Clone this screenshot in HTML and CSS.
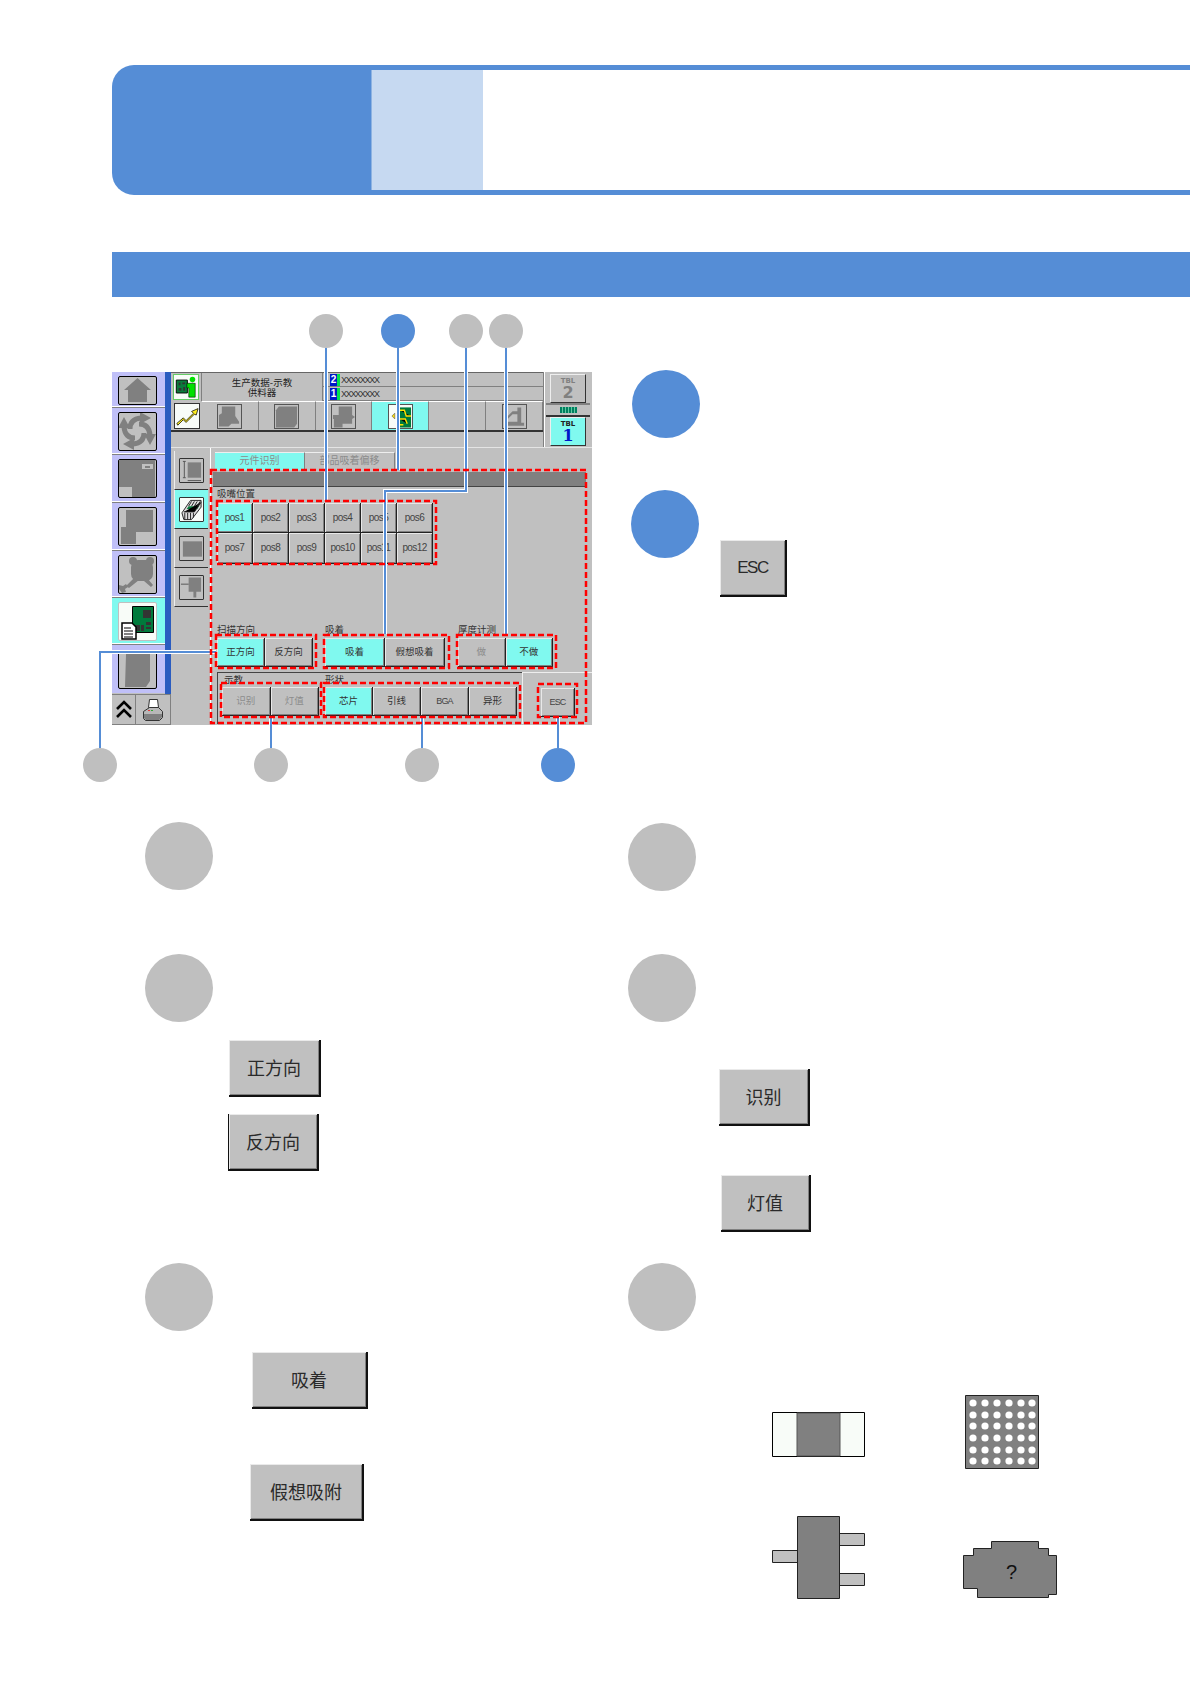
FILE: index.html
```html
<!DOCTYPE html>
<html lang="zh">
<head>
<meta charset="utf-8">
<title>吸嘴位置</title>
<link rel="stylesheet" href="styles.css">
</head>
<body>
<header class="chapter">
  <div class="chapter-tab"></div>
  <div class="chapter-rest"><div class="chapter-light"></div></div>
</header>
<div class="section-bar"></div>

<section class="stage">
  <div class="panel">
    <div class="side">
      <div class="rail">
        <nav class="rail-stack">
          <div class="rail-row first"><div class="nav-btn short">
            <svg width="39" height="29" viewBox="0 0 39 29"><path class="g" d="M19.5 2 33 14h-4v12H10V14H6z"/></svg>
          </div></div>
          <div class="rail-row h47"><div class="nav-btn">
            <svg width="39" height="39" viewBox="0 0 39 39">
              <g class="swirl">
                <g><path class="arm" d="M12 17Q12 7 23 6"/><path class="g" d="M22 0 33 6 22 12z"/></g>
                <g transform="rotate(90 19 19)"><path class="arm" d="M12 17Q12 7 23 6"/><path class="g" d="M22 0 33 6 22 12z"/></g>
                <g transform="rotate(180 19 19)"><path class="arm" d="M12 17Q12 7 23 6"/><path class="g" d="M22 0 33 6 22 12z"/></g>
                <g transform="rotate(270 19 19)"><path class="arm" d="M12 17Q12 7 23 6"/><path class="g" d="M22 0 33 6 22 12z"/></g>
              </g>
            </svg>
          </div></div>
          <div class="rail-row"><div class="nav-btn">
            <svg width="39" height="39" viewBox="0 0 39 39"><path class="g" d="M1 1h36v37H14V28H1z"/><path class="lt" d="M24 5h11v5H24z"/><path class="g" d="M27 7h5v2h-5z"/></svg>
          </div></div>
          <div class="rail-row"><div class="nav-btn">
            <svg width="39" height="39" viewBox="0 0 39 39"><path class="g" d="M8 3h27v22H18v12H3V20h5z"/></svg>
          </div></div>
          <div class="rail-row h47"><div class="nav-btn">
            <svg width="39" height="39" viewBox="0 0 39 39">
              <circle class="g" cx="15" cy="6" r="4"/><circle class="g" cx="32" cy="6" r="4"/>
              <rect class="g" x="13" y="5" width="22" height="21" rx="7"/>
              <path class="g" d="M30 24l5 6-2 2-7-6zM17 22l4 3-10 8-3-2z"/>
              <path class="g" d="M1 30l4 1 3-2 2 3-3 2 1 3-4 1-3-4z"/>
            </svg>
          </div></div>
          <div class="rail-row h47 active"><div class="nav-btn white">
            <svg width="39" height="39" viewBox="0 0 39 39">
              <path fill="#007a3c" stroke="#000" d="M14.500 4.500h21v26h-21z"/>
              <path fill="#333" d="M25 8h8v8h-8zM28 20h5v3h-5zM28 25h5v2h-5zM17 23h5v6h-5zM23 23h3v6h-3z"/>
              <path fill="#fff" stroke="#000" stroke-width="1.500" d="M4 21h10l4 4v12H4z"/>
              <path stroke="#000" d="M6 26h7M6 29h9M6 32h9M6 35h9"/>
            </svg>
          </div></div>
          <div class="rail-row h48"><div class="nav-btn">
            <svg width="39" height="39" viewBox="0 0 39 39"><path class="g" d="M8 4h24v27l-4 6H7z"/></svg>
          </div></div>
        </nav>
        <div class="rail-stripe"></div>
      </div>
      <div class="side-foot">
        <div class="foot-cell up">
          <svg width="18" height="19" viewBox="0 0 18 19"><path fill="none" stroke="#000" stroke-width="2.600" d="M2 9l7-7 7 7M2 17l7-7 7 7"/></svg>
        </div>
        <div class="foot-cell print">
          <svg width="22" height="24" viewBox="0 0 22 24"><path fill="#fff" stroke="#333" d="M7.500 1.500h8l1 8h-10z"/><path fill="#b8b8b8" stroke="#333" d="M1.500 13.500l6-4h9l4 4v6l-3 3h-14l-2-2z"/><path fill="#808080" d="M2 16h18v3l-3 3H4l-2-2z"/><path fill="#e33" d="M6 12h2v1H6z"/><path fill="#3a3" d="M9 12h2v1H9z"/></svg>
        </div>
      </div>
    </div>

    <div class="main">
      <div class="upper">
        <div class="upper-left">
          <div class="info-row">
            <div class="corner-icon green-frame">
              <svg width="24" height="24" viewBox="0 0 26 26">
                <path fill="#0a7c3c" stroke="#000" d="M2.500 5.500h12v14h-12z"/>
                <path fill="#333" d="M5 8h2v3H5zM9 8h3v2H9zM5 14h3v3H5zM10 13h2v4h-2z"/>
                <circle cx="20" cy="5" r="3" fill="#00e000"/>
                <path fill="#00e000" stroke="#000" stroke-width=".6" d="M14 9h9v15h-7V14h-2z"/>
              </svg>
            </div>
            <div class="title">生产数据-示教<br>供料器</div>
            <div class="xrows">
              <div class="xrow"><span class="num">2</span><span class="green"></span><span class="xtext">XXXXXXXX</span></div>
              <div class="xrow"><span class="num">1</span><span class="green"></span><span class="xtext">XXXXXXXX</span></div>
            </div>
          </div>
          <div class="tool-row">
            <div class="corner-icon arrow-frame">
              <svg width="24" height="24" viewBox="0 0 26 26"><path fill="#ffee20" stroke="#000" stroke-width=".8" d="M2 21l7-6 3 3 8-8-2-2 7-3-2 7-2-1-9 9-3-3-6 6z"/></svg>
            </div>
            <div class="tool"><div class="tool-box"><svg width="24" height="24" viewBox="0 0 24 24"><path class="g" d="M4 1h14v10l4 6v2H14l-3 3H1V10l3-2z"/></svg></div></div>
            <div class="tool"><div class="tool-box"><svg width="24" height="24" viewBox="0 0 24 24"><path class="g" d="M4 1h19v18l-3 4H1V5z"/></svg></div></div>
            <div class="tool"><div class="tool-box"><svg width="24" height="24" viewBox="0 0 24 24"><path class="g" d="M7 1h14v9l3 2-3 2v5H11v4H2v-9H1v-4h6z"/></svg></div></div>
            <div class="tool on"><div class="tool-box white">
              <svg width="24" height="24" viewBox="0 0 24 24"><path fill="#007a3c" d="M11 2h12v21H11z"/><path stroke="#ffe000" stroke-width="1.500" d="M11 5h5l2 6h5M11 14h6l2 5M11 20h4"/><path fill="#ffe000" stroke="#555" stroke-width=".6" d="M3 11l3-3v6z"/></svg>
            </div></div>
            <div class="tool"></div>
            <div class="tool"><div class="tool-box"><svg width="24" height="24" viewBox="0 0 24 24"><path class="g" d="M15 2h4v16h3v3H4v-4h11V9H10l-6 6H1l9-9h5z"/></svg></div></div>
          </div>
          <div class="blank-row"></div>
        </div>
        <div class="tbl">
          <div class="tbl-btn"><span class="tbl-name">TBL</span><span class="tbl-num">2</span></div>
          <div class="tbl-mid"><span class="tbl-tag"></span></div>
          <div class="tbl-btn on"><span class="tbl-name dark">TBL</span><span class="tbl-num blue">1</span></div>
        </div>
      </div>

      <div class="lower">
        <div class="vtabs">
          <div class="vtab"><div class="tab-box"><svg width="24" height="24" viewBox="0 0 24 24"><path class="g" d="M8 3h14v16H8z"/><path class="thin" d="M3 2h3M4.500 2v17M3 19h3M8 22h14"/></svg></div></div>
          <div class="vtab on"><div class="tab-box white"><svg width="24" height="24" viewBox="0 0 24 24"><path fill="#ddd" stroke="#222" d="M2 15l9-13h11v7L12 22H4z"/><path fill="#0a7c3c" d="M9 8h11l-2 3H7z"/><path stroke="#222" d="M5 15v7M8 15v7M11 15v7M14 15v5M4 14h11L22 4M9 8l3-5M12 8l3-5M15 8l3-5M18 8l3-5"/></svg></div></div>
          <div class="vtab"><div class="tab-box"><svg width="24" height="24" viewBox="0 0 24 24"><path class="g" d="M3 4h20v16H3z"/></svg></div></div>
          <div class="vtab"><div class="tab-box"><svg width="24" height="24" viewBox="0 0 24 24"><path class="g" d="M9 1h13v15h-5v6h-3v-6H9z"/><path class="thin" d="M1 8h8"/></svg></div></div>
        </div>
        <div class="work">
          <div class="tabs">
            <div class="tab on off">元件识别</div>
            <div class="tab off">部品吸着偏移</div>
          </div>
          <div class="darkbar"></div>
          <div class="label pos-label">吸嘴位置</div>
          <div class="pos-grid">
            <div class="cell latin on">pos1</div><div class="cell latin">pos2</div><div class="cell latin">pos3</div><div class="cell latin">pos4</div><div class="cell latin">pos5</div><div class="cell latin">pos6</div>
            <div class="cell latin">pos7</div><div class="cell latin">pos8</div><div class="cell latin">pos9</div><div class="cell latin">pos10</div><div class="cell latin">pos11</div><div class="cell latin">pos12</div>
          </div>
          <div class="field-row upper-fields">
            <div class="field w96"><div class="label">扫描方向</div><div class="btns"><div class="cell on">正方向</div><div class="cell">反方向</div></div></div>
            <div class="field w120"><div class="label">吸着</div><div class="btns"><div class="cell on">吸着</div><div class="cell">假想吸着</div></div></div>
            <div class="field w95"><div class="label">厚度计测</div><div class="btns"><div class="cell off">做</div><div class="cell on">不做</div></div></div>
          </div>
          <div class="field-row bottom-fields">
            <div class="bottom-main">
              <div class="field w97"><div class="label teach-label">示教</div><div class="btns"><div class="cell off">识别</div><div class="cell off">灯值</div></div></div>
              <div class="field w192"><div class="label">形状</div><div class="btns"><div class="cell on">芯片</div><div class="cell">引线</div><div class="cell latin-wide">BGA</div><div class="cell">异形</div></div></div>
            </div>
            <div class="bottom-esc"><div class="cell esc latin-wide">ESC</div></div>
          </div>
        </div>
      </div>
    </div>
  </div>

  <div class="intro">
    <div class="dot big blue"></div>
    <div class="intro-esc">
      <div class="dot big blue"></div>
      <div class="key key-esc">ESC</div>
    </div>
  </div>

  <svg class="overlay" width="1190" height="500" viewBox="0 297 1190 500">
    <g class="halo">
      <path d="M326 348V500M398 348V470M466 348V491H385V634M506 348V634M100 748V652H216M271 717V748M422 717V748M558 717V748"/>
    </g>
    <g class="lead">
      <path d="M326 348V500M398 348V470M466 348V491H385V634M506 348V634M100 748V652H216M271 717V748M422 717V748M558 717V748"/>
    </g>
    <g class="dash">
      <rect x="211" y="470" width="375" height="253"/>
      <rect x="217" y="501" width="219" height="63"/>
      <rect x="216" y="635" width="100" height="33"/>
      <rect x="324" y="635" width="125" height="33"/>
      <rect x="457" y="635" width="99" height="33"/>
      <rect x="221" y="683" width="100" height="34"/>
      <rect x="324" y="683" width="196" height="34"/>
      <rect x="538" y="684" width="39" height="33"/>
    </g>
    <circle class="c-grey" cx="326" cy="331" r="17"/>
    <circle class="c-blue" cx="398" cy="331" r="17"/>
    <circle class="c-grey" cx="466" cy="331" r="17"/>
    <circle class="c-grey" cx="506" cy="331" r="17"/>
    <circle class="c-grey" cx="100" cy="765" r="17"/>
    <circle class="c-grey" cx="271" cy="765" r="17"/>
    <circle class="c-grey" cx="422" cy="765" r="17"/>
    <circle class="c-blue" cx="558" cy="765" r="17"/>
  </svg>
</section>

<section class="notes">
  <div class="note"><div class="dot big"></div></div>
  <div class="note note-low"><div class="dot big"></div></div>

  <div class="note">
    <div class="dot big"></div>
    <div class="key key-fwd">正方向</div>
    <div class="key key-rev">反方向</div>
  </div>
  <div class="note">
    <div class="dot big"></div>
    <div class="key key-id">识别</div>
    <div class="key key-lamp">灯值</div>
  </div>

  <div class="note">
    <div class="dot big"></div>
    <div class="key key-suck">吸着</div>
    <div class="key key-virt">假想吸附</div>
  </div>
  <div class="note">
    <div class="dot big"></div>
    <div class="shapes">
      <svg class="shape-chip" width="94" height="46" viewBox="0 0 94 46">
        <path fill="#f8fcf8" stroke="#000" d="M.500.500h92v44H.500z"/>
        <path fill="#808080" stroke="#555" d="M25 1h43v43H25z"/>
      </svg>
      <svg class="shape-bga" width="74" height="74" viewBox="0 0 74 74">
        <path fill="#808080" stroke="#222" d="M.500.500h73v73H.500z"/>
        <g fill="#fff">
          <circle cx="8" cy="8" r="3.600"/><circle cx="20" cy="8" r="3.600"/><circle cx="32" cy="8" r="3.600"/><circle cx="44" cy="8" r="3.600"/><circle cx="56" cy="8" r="3.600"/><circle cx="67" cy="8" r="3.600"/>
          <circle cx="8" cy="20" r="3.600"/><circle cx="20" cy="20" r="3.600"/><circle cx="32" cy="20" r="3.600"/><circle cx="44" cy="20" r="3.600"/><circle cx="56" cy="20" r="3.600"/><circle cx="67" cy="20" r="3.600"/>
          <circle cx="8" cy="31" r="3.600"/><circle cx="20" cy="31" r="3.600"/><circle cx="32" cy="31" r="3.600"/><circle cx="44" cy="31" r="3.600"/><circle cx="56" cy="31" r="3.600"/><circle cx="67" cy="31" r="3.600"/>
          <circle cx="8" cy="43" r="3.600"/><circle cx="20" cy="43" r="3.600"/><circle cx="32" cy="43" r="3.600"/><circle cx="44" cy="43" r="3.600"/><circle cx="56" cy="43" r="3.600"/><circle cx="67" cy="43" r="3.600"/>
          <circle cx="8" cy="55" r="3.600"/><circle cx="20" cy="55" r="3.600"/><circle cx="32" cy="55" r="3.600"/><circle cx="44" cy="55" r="3.600"/><circle cx="56" cy="55" r="3.600"/><circle cx="67" cy="55" r="3.600"/>
          <circle cx="8" cy="66" r="3.600"/><circle cx="20" cy="66" r="3.600"/><circle cx="32" cy="66" r="3.600"/><circle cx="44" cy="66" r="3.600"/><circle cx="56" cy="66" r="3.600"/><circle cx="67" cy="66" r="3.600"/>
        </g>
      </svg>
      <svg class="shape-sot" width="94" height="84" viewBox="0 0 94 84">
        <path fill="#c0c0c0" stroke="#222" d="M.500 34.500h26v12H.500zM66.500 17.500h26v12h-26zM66.500 57.500h26v12h-26z"/>
        <path fill="#808080" stroke="#222" d="M25.500.500h42v82h-42z"/>
      </svg>
      <div class="shape-odd">
        <svg width="94" height="58" viewBox="0 0 94 58">
          <path fill="#808080" stroke="#222" d="M28.500.500h47v7h10v7h8v39h-8v3h-71v-9H.500V14.500h10v-7h18z"/>
        </svg>
        <span class="odd-mark">?</span>
      </div>
    </div>
  </div>
</section>
</body>
</html>
```

FILE: styles.css
```css
* { box-sizing: border-box; }
html, body { margin: 0; padding: 0; background: #fff; }
body {
  width: 1190px;
  height: 1684px;
  overflow: hidden;
  font-family: "Noto Sans CJK SC", "Liberation Sans", sans-serif;
  color: #222;
}

/* page furniture */
.chapter { display: flex; height: 130px; margin: 65px 0 0 112px; }
.chapter-tab { width: 259px; background: #558dd6; border-radius: 22px 0 0 22px; }
.chapter-rest { flex: 1; border-top: 5px solid #558dd6; border-bottom: 5px solid #558dd6; }
.chapter-light { width: 112px; height: 100%; background: #c6d9f1; border-left: 1px solid #8db3e2; }
.section-bar { height: 45px; margin: 57px 0 0 112px; background: #558dd6; }

/* diagram */
.stage { position: relative; display: flex; height: 525px; padding-top: 73px; }
.overlay { position: absolute; left: 0; top: 0; pointer-events: none; }
.halo path { fill: none; stroke: #fff; stroke-width: 4; }
.lead path { fill: none; stroke: #558dd6; stroke-width: 2; }
.dash rect { fill: none; stroke: #f00; stroke-width: 2.500; stroke-dasharray: 6 3; }
.c-grey { fill: #bfbfbf; }
.c-blue { fill: #558dd6; }

.panel {
  display: flex;
  width: 480px;
  height: 353px;
  margin: 2px 0 0 112px;
  background: #c0c0c0;
  font-size: 9px;
  line-height: 1;
}
.g { fill: #808080; }
.lt { fill: #c0c0c0; }
.thin { fill: none; stroke: #555; }

/* left rail */
.side { display: flex; flex-direction: column; width: 59px; }
.rail { display: flex; height: 322px; }
.rail-stack { width: 53px; }
.rail-stripe { width: 6px; background: #2a5cc0; }
.rail-row {
  display: flex;
  align-items: center;
  justify-content: center;
  height: 48px;
  background: #c0c0f8;
  border-bottom: 1px solid #808080;
  box-shadow: inset 0 -1px 0 #fff;
  padding-right: 2px;
}
.rail-row.first { height: 36px; padding-top: 1px; }
.rail-row.h47 { height: 47px; }
.rail-row.h48 { height: 48px; border-bottom: 0; box-shadow: none; }
.rail-row.active { background: #80f9ef; }
.nav-btn {
  width: 39px;
  height: 39px;
  background: #c0c0c0;
  border: 1px solid #000;
  border-radius: 2px;
  overflow: hidden;
  display: flex;
  align-items: center;
  justify-content: center;
}
.nav-btn svg { flex: none; }
.nav-btn.short { height: 29px; }
.nav-btn.white { background: #f8fcf8; border-color: #c0c0c0; }
.arm { fill: none; stroke: #808080; stroke-width: 5; }
.side-foot { display: flex; flex: 1; border-top: 1px solid #808080; }
.foot-cell {
  display: flex;
  align-items: center;
  justify-content: center;
  background: #c0c0c0;
  border-right: 1px solid #808080;
  border-bottom: 1px solid #808080;
}
.foot-cell.up { width: 24px; }
.foot-cell.print { width: 35px; }

/* main area */
.main { display: flex; flex-direction: column; width: 421px; }
.upper { display: flex; height: 76px; border-bottom: 1px solid #e4e4e4; }
.upper-left { width: 372px; }
.info-row { display: flex; height: 29px; border-top: 1px solid #666; }
.corner-icon {
  display: flex;
  align-items: center;
  justify-content: center;
  width: 31px;
  flex: none;
  border-right: 1px solid #808080;
}
.corner-icon svg { background: #f8fcf8; }
.green-frame svg { outline: 1px solid #66cc66; }
.arrow-frame svg { outline: 1px solid #333; }
.title { width: 121px; padding-top: 4px; text-align: center; font-size: 9.500px; line-height: 10px; border-right: 1px solid #808080; }
.xrows { flex: 1; }
.xrow { display: flex; align-items: center; height: 14px; padding-left: 7px; border-bottom: 1px solid #808080; }
.num {
  width: 7px;
  height: 12px;
  background: #0018c8;
  color: #fff;
  font: bold 10px/12px "Liberation Sans", sans-serif;
  text-align: center;
}
.green { width: 3px; height: 12px; background: #00e050; margin-right: 1px; }
.xtext { font: 9px/12px "Liberation Sans", sans-serif; letter-spacing: -1.300px; color: #333; }
.tool-row { display: flex; height: 31px; border-bottom: 2px solid #333; }
.tool-row .corner-icon { border-right: 0; }
.tool {
  display: flex;
  align-items: center;
  justify-content: center;
  flex: 1;
  border-top: 1px solid #fff;
  border-right: 1px solid #808080;
}
.tool.on { background: #80f9ef; }
.tool-box {
  display: flex;
  width: 25px;
  height: 25px;
  background: #c0c0c0;
  border: 1px solid #555;
}
.tool-box.white { background: #f8fcf8; }
.blank-row { height: 15px; }
.tbl { flex: 1; display: flex; flex-direction: column; align-items: center; border-left: 1px solid #808080; box-shadow: inset 1px 0 0 #fff; padding-top: 2px; }
.tbl-btn {
  display: flex;
  flex-direction: column;
  align-items: center;
  width: 36px;
  height: 29px;
  padding-top: 3px;
  border-right: 1px solid #333;
  border-bottom: 1px solid #333;
  border-top: 1px solid #eee;
  border-left: 1px solid #eee;
  color: #808080;
}
.tbl-btn.on { background: #80f9ef; }
.tbl-name { font: bold 7px/7px "DejaVu Sans", sans-serif; }
.tbl-name.dark { color: #222; }
.tbl-num { font: bold 16px/15px "DejaVu Sans", sans-serif; }
.tbl-num.blue { color: #0018c8; font-family: "DejaVu Serif", serif; }
.tbl-mid { display: flex; justify-content: center; align-items: center; width: 44px; height: 14px; border-top: 2px solid #808080; border-bottom: 2px solid #333; }
.tbl-tag { width: 17px; height: 6px; background: repeating-linear-gradient(90deg, #008060 0 2px, #60c8a0 2px 3px); }

.lower { display: flex; height: 276px; }
.vtabs { width: 40px; padding: 3px 2px 0 3px; border-right: 1px solid #fff; }
.vtab {
  display: flex;
  align-items: center;
  justify-content: center;
  height: 39px;
  border-bottom: 1px solid #333;
  border-left: 1px solid #eee;
}
.vtab.on { background: #80f9ef; }
.tab-box {
  display: flex;
  width: 25px;
  height: 25px;
  background: #c0c0c0;
  border: 1px solid #333;
  border-radius: 1px;
}
.tab-box.white { background: #f8fcf8; }

.work { flex: 1; display: flex; flex-direction: column; }
.tabs { display: flex; height: 24px; padding: 4px 0 0 4px; }
.tab {
  display: flex;
  align-items: center;
  justify-content: center;
  width: 90px;
  height: 18px;
  padding-bottom: 3px;
  font-size: 10px;
  border-top: 1px solid #eee;
  border-right: 1px solid #808080;
}
.tab.on { background: #80f9ef; }
.off { color: #8c8c8c; }
.darkbar { width: 373px; height: 15px; margin-left: 2px; background: #808080; border-bottom: 1px solid #444; }
.label { height: 13px; font-size: 9.500px; line-height: 9px; white-space: nowrap; color: #333; }
.pos-label { height: 16px; margin-left: 6px; line-height: 12px; }
.pos-grid { display: grid; grid-template-columns: repeat(6, 36px); grid-template-rows: 30px 31px; width: 216px; margin-left: 6px; }
.cell {
  display: flex;
  flex: 1;
  align-items: center;
  justify-content: center;
  background: #c0c0c0;
  border-right: 1px solid #222;
  border-bottom: 1px solid #222;
  box-shadow: inset 1px 1px 0 #e8e8e8, inset -1px -1px 0 #808080;
  font-size: 9.500px;
  min-width: 0;
  color: #333;
}
.cell.off { color: #8c8c8c; }
.cell.on { background: #80f9ef; }
.latin { font-family: "Liberation Sans", sans-serif; font-size: 10px; letter-spacing: -.6px; color: #444; }
.latin-wide { font-family: "Liberation Sans", sans-serif; font-size: 9px; letter-spacing: -.8px; color: #444; }
.field-row { display: flex; margin-left: 6px; }
.field { display: flex; flex-direction: column; }
.btns { display: flex; height: 29px; }
.upper-fields { gap: 12px; margin-top: 61px; }
.w96 { width: 96px; }
.w120 { width: 120px; margin-right: 1px; }
.w95 { width: 95px; }
.w97 { width: 97px; }
.w192 { width: 192px; }
.bottom-fields { flex: 1; margin: 5px 0 0 6px; }
.bottom-main { display: flex; gap: 6px; width: 305px; padding: 0 0 0 5px; border-top: 1px solid #444; box-shadow: inset 1px 0 0 #444; }
.bottom-main .label { height: 14px; line-height: 12px; }
.bottom-main .teach-label { padding-left: 2px; }
.bottom-esc { flex: 1; padding: 15px 0 0 18px; border-top: 1px solid #eee; border-left: 1px solid #eee; }
.esc { flex: none; width: 34px; height: 29px; }

/* callout dots and sample keys */
.dot { border-radius: 50%; background: #bfbfbf; }
.dot.big { width: 68px; height: 68px; }
.dot.blue { background: #558dd6; }
.intro { display: flex; flex-direction: column; gap: 52px; margin-left: 40px; }
.intro-esc { display: flex; margin-left: -1px; }
.key {
  display: flex;
  align-items: center;
  justify-content: center;
  height: 57px;
  padding-bottom: 2px;
  background: #c0c0c0;
  font-size: 18px;
  color: #2a2a2a;
  border-right: 2px solid #111;
  border-bottom: 2px solid #111;
  box-shadow: inset 1px 1px 0 #eaeaea, inset -1px -1px 0 #808080;
}
.key-esc { width: 67px; margin: 50px 0 0 21px; padding-bottom: 0; font-family: "Liberation Sans", sans-serif; font-size: 17px; letter-spacing: -1.500px; }
.notes { display: grid; grid-template-columns: 483px 1fr; grid-template-rows: 132px 309px 1fr; margin: 0 0 0 145px; }
.note-low { padding-top: 1px; }
.key-fwd { width: 92px; margin: 18px 0 0 84px; }
.key-rev { width: 91px; margin: 17px 0 0 83px; border-left: 1px solid #111; }
.key-id { width: 91px; margin: 47px 0 0 91px; }
.key-lamp { width: 90px; margin: 49px 0 0 93px; }
.key-suck { width: 116px; margin: 21px 0 0 107px; }
.key-virt { width: 114px; margin: 55px 0 0 105px; }
.shapes { display: grid; grid-template-columns: 191px auto; grid-template-rows: 121px 84px; margin: 64px 0 0 144px; }
.shapes svg { display: block; }
.shape-chip { margin-top: 17px; }
.shape-bga { margin-left: 2px; }
.shape-odd { position: relative; width: 94px; height: 58px; margin-top: 25px; }
.odd-mark {
  position: absolute;
  left: 43px;
  top: 20px;
  font: 20px/22px "Liberation Sans", sans-serif;
  color: #111;
}
```
